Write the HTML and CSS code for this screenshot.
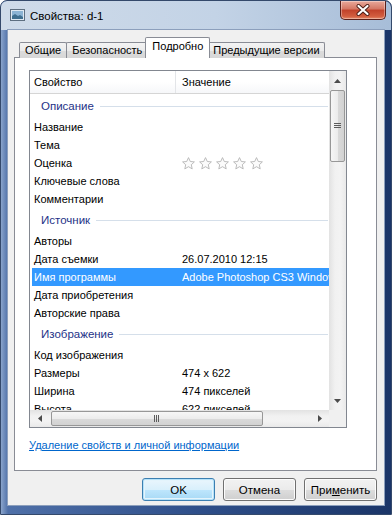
FILE: index.html
```html
<!DOCTYPE html>
<html lang="ru">
<head>
    <meta charset="UTF-8">
    <title>Свойства: d-1</title>
    <link rel="stylesheet" href="styles.css">
</head>
<body>
    <svg width="0" height="0" class="defs">
        <defs>
            <symbol id="star" viewBox="0 0 13 13">
                <polygon points="6.5,0.6 8.3,4.5 12.4,4.9 9.3,7.7 10.2,11.9 6.5,9.7 2.8,11.9 3.7,7.7 0.6,4.9 4.7,4.5" fill="#fbfbfb" stroke="#b4b4b4" stroke-width="0.9" stroke-linejoin="round"/>
            </symbol>
        </defs>
    </svg>

    <div class="window">
        <div class="titlebar">
            <svg class="app-icon" width="15" height="12" viewBox="0 0 15 12">
                <rect x="0.5" y="0.5" width="14" height="11" fill="#dfe9f2" stroke="#5e6f80"/>
                <rect x="2" y="2" width="11" height="8" fill="#8cb4d4"/>
                <path d="M2 7 L5 5 L8 7 L10 6 L13 8 L13 10 L2 10 Z" fill="#3f6f8f"/>
            </svg>
            <span class="title">Свойства: d-1</span>
            <div class="close">
                <svg width="14" height="12" viewBox="0 0 14 12">
                    <path d="M2.5 2 L11.5 10 M11.5 2 L2.5 10" stroke="#4a1c16" stroke-width="4" stroke-linecap="round"/>
                    <path d="M2.5 2 L11.5 10 M11.5 2 L2.5 10" stroke="#fff" stroke-width="2.2" stroke-linecap="round"/>
                </svg>
            </div>
        </div>

        <div class="client">
            <div class="tabs">
                <div class="tab">Общие</div>
                <div class="tab">Безопасность</div>
                <div class="tab active">Подробно</div>
                <div class="tab">Предыдущие версии</div>
            </div>

            <div class="panel">
                <div class="list">
                    <div class="list-top">
                        <div class="list-view">
                            <div class="list-head">
                                <div class="col-name">Свойство</div>
                                <div class="col-value">Значение</div>
                            </div>

                            <div class="group"><span>Описание</span></div>
                            <div class="row"><div class="col-name">Название</div><div class="col-value"></div></div>
                            <div class="row"><div class="col-name">Тема</div><div class="col-value"></div></div>
                            <div class="row">
                                <div class="col-name">Оценка</div>
                                <div class="col-value stars">
                                    <svg width="13" height="13"><use href="#star"/></svg>
                                    <svg width="13" height="13"><use href="#star"/></svg>
                                    <svg width="13" height="13"><use href="#star"/></svg>
                                    <svg width="13" height="13"><use href="#star"/></svg>
                                    <svg width="13" height="13"><use href="#star"/></svg>
                                </div>
                            </div>
                            <div class="row"><div class="col-name">Ключевые слова</div><div class="col-value"></div></div>
                            <div class="row"><div class="col-name">Комментарии</div><div class="col-value"></div></div>

                            <div class="group"><span>Источник</span></div>
                            <div class="row"><div class="col-name">Авторы</div><div class="col-value"></div></div>
                            <div class="row"><div class="col-name">Дата съемки</div><div class="col-value">26.07.2010 12:15</div></div>
                            <div class="row selected"><div class="col-name">Имя программы</div><div class="col-value">Adobe Photoshop CS3 Windows</div></div>
                            <div class="row"><div class="col-name">Дата приобретения</div><div class="col-value"></div></div>
                            <div class="row"><div class="col-name">Авторские права</div><div class="col-value"></div></div>

                            <div class="group"><span>Изображение</span></div>
                            <div class="row"><div class="col-name">Код изображения</div><div class="col-value"></div></div>
                            <div class="row"><div class="col-name">Размеры</div><div class="col-value">474 x 622</div></div>
                            <div class="row"><div class="col-name">Ширина</div><div class="col-value">474 пикселей</div></div>
                            <div class="row"><div class="col-name">Высота</div><div class="col-value">622 пикселей</div></div>
                        </div>

                        <div class="vscroll">
                            <div class="arrow-v">
                                <svg width="7" height="4" viewBox="0 0 7 4"><path d="M0 4 L3.5 0 L7 4 Z" fill="#4b4b4b"/></svg>
                            </div>
                            <div class="track-v">
                                <div class="thumb-v">
                                    <svg width="7" height="6" viewBox="0 0 7 6">
                                        <path d="M0 0.5 H7 M0 2.5 H7 M0 4.5 H7" stroke="#5c5c5c" stroke-width="1"/>
                                    </svg>
                                </div>
                            </div>
                            <div class="arrow-v">
                                <svg width="7" height="4" viewBox="0 0 7 4"><path d="M0 0 L3.5 4 L7 0 Z" fill="#4b4b4b"/></svg>
                            </div>
                        </div>
                    </div>

                    <div class="list-bottom">
                        <div class="hscroll">
                            <div class="arrow-h">
                                <svg width="4" height="7" viewBox="0 0 4 7"><path d="M4 0 L0 3.5 L4 7 Z" fill="#4b4b4b"/></svg>
                            </div>
                            <div class="track-h">
                                <div class="thumb-h">
                                    <svg width="6" height="7" viewBox="0 0 6 7">
                                        <path d="M0.5 0 V7 M2.5 0 V7 M4.5 0 V7" stroke="#5c5c5c" stroke-width="1"/>
                                    </svg>
                                </div>
                            </div>
                            <div class="arrow-h">
                                <svg width="4" height="7" viewBox="0 0 4 7"><path d="M0 0 L4 3.5 L0 7 Z" fill="#4b4b4b"/></svg>
                            </div>
                        </div>
                        <div class="corner"></div>
                    </div>
                </div>

                <a class="link" href="#">Удаление свойств и личной информации</a>
            </div>

            <div class="buttons">
                <button class="btn default">OK</button>
                <button class="btn">Отмена</button>
                <button class="btn">При<u>м</u>енить</button>
            </div>
        </div>
    </div>
</body>
</html>
```

FILE: styles.css
```css
* {
    box-sizing: border-box;
}
body {
    margin: 0;
    font-family: "Liberation Sans", Arial, sans-serif;
    font-size: 11px;
    color: #000;
}
.defs {
    position: absolute;
}
.window {
    width: 392px;
    height: 515px;
    display: flex;
    flex-direction: column;
    padding: 0 7px 9px 7px;
    border: 1px solid #34496b;
    border-radius: 7px 7px 0 0;
    background: linear-gradient(to right, #8aa4cb, #4f70a8 7px, #2f4f8a 50%, #1b3568 100%);
    overflow: hidden;
}
.titlebar {
    height: 29px;
    margin: 0 -7px;
    padding: 0 5px 0 9px;
    display: flex;
    align-items: flex-start;
    background: linear-gradient(to right, #cfdbe9, #c3d3e6 55%, #a7bdd8);
    border-radius: 6px 6px 0 0;
}
.app-icon {
    margin-top: 8px;
}
.title {
    margin: 8px 0 0 5px;
    font-size: 11.5px;
    line-height: 15px;
}
.close {
    margin-left: auto;
    width: 46px;
    height: 19px;
    display: flex;
    align-items: center;
    justify-content: center;
    border: 1px solid #5a1f1a;
    border-top: none;
    border-radius: 0 0 5px 5px;
    background: linear-gradient(to bottom, #e9a99b, #d47663 45%, #c1412a 50%, #d25d3f 85%, #e58a6a);
    box-shadow: inset 0 0 0 1px rgba(255, 255, 255, 0.35);
}
.client {
    flex: 1;
    background: #f0f0f0;
    padding: 7px 7px 0 6px;
    box-shadow: 0 0 0 1px #8c9fbc;
}
.tabs {
    display: flex;
    align-items: flex-end;
    height: 21px;
    padding-left: 5px;
    margin-bottom: -1px;
    position: relative;
}
.tab {
    height: 16px;
    line-height: 14px;
    padding: 0 5px;
    border: 1px solid #898c95;
    border-bottom: none;
    margin-right: -1px;
    border-radius: 2px 2px 0 0;
    background: linear-gradient(to bottom, #f3f3f3, #ebebeb 50%, #dcdcdc 51%, #d7d7d7);
    white-space: nowrap;
}
.tab.active {
    height: 21px;
    line-height: 17px;
    padding: 0 6px;
    margin: 0 -1px 0 -2px;
    background: #fff;
    position: relative;
    z-index: 1;
}
.tab.active + .tab {
    margin-left: -1px;
    padding: 0 4px;
}
.panel {
    height: 414px;
    border: 1px solid #898c95;
    background: #fff;
    padding: 12px 0 0 14px;
}
.list {
    width: 318px;
    height: 358px;
    border: 1px solid #828790;
    display: flex;
    flex-direction: column;
}
.list-top {
    display: flex;
    height: 339px;
}
.list-view {
    width: 299px;
    overflow: hidden;
}
.list-head {
    display: flex;
    height: 23px;
    line-height: 23px;
    border-bottom: 1px solid #d5d5d5;
    background: linear-gradient(to bottom, #fff, #fff 50%, #f6f7f9);
}
.list-head .col-name {
    border-right: 1px solid #e3e5e8;
}
.col-name {
    width: 146px;
    flex-shrink: 0;
    padding-left: 4px;
    white-space: nowrap;
    overflow: hidden;
}
.col-value {
    padding-left: 6px;
    white-space: nowrap;
}
.row {
    display: flex;
    height: 18px;
    line-height: 18px;
}
.row.selected {
    background: linear-gradient(to right, transparent 2px, #3399ff 2px);
    color: #fff;
}
.stars {
    display: flex;
    align-items: center;
    gap: 4px;
}
.group {
    height: 24px;
    display: flex;
    align-items: center;
    padding: 0 1px 0 11px;
    color: #1e3287;
    font-size: 11.5px;
}
.group::after {
    content: "";
    flex: 1;
    height: 1px;
    margin-left: 6px;
    background: #d5dfea;
}
.vscroll {
    width: 17px;
    display: flex;
    flex-direction: column;
    background: linear-gradient(to right, #e2e2e2, #f1f1f1 35%, #f3f3f3 65%, #e9e9e9);
}
.arrow-v {
    height: 19px;
    display: flex;
    align-items: center;
    justify-content: center;
}
.track-v {
    flex: 1;
}
.thumb-v {
    height: 72px;
    margin: 0 1px;
    border: 1px solid #979797;
    border-radius: 2px;
    background: linear-gradient(to right, #f6f6f6, #ececec 50%, #dadada 51%, #d2d2d2);
    display: flex;
    align-items: center;
    justify-content: center;
}
.list-bottom {
    display: flex;
    height: 17px;
}
.hscroll {
    width: 299px;
    display: flex;
    background: linear-gradient(to bottom, #e2e2e2, #f1f1f1 35%, #f3f3f3 65%, #e9e9e9);
}
.arrow-h {
    width: 19px;
    display: flex;
    align-items: center;
    justify-content: center;
}
.track-h {
    flex: 1;
    padding-left: 2px;
}
.thumb-h {
    width: 212px;
    height: 15px;
    margin-top: 1px;
    border: 1px solid #979797;
    border-radius: 2px;
    background: linear-gradient(to bottom, #f6f6f6, #ececec 50%, #dadada 51%, #d2d2d2);
    display: flex;
    align-items: center;
    justify-content: center;
}
.corner {
    flex: 1;
    background: #f0f0f0;
}
.link {
    display: inline-block;
    margin-top: 10px;
    color: #0066cc;
    font-size: 11px;
    line-height: 14px;
}
.buttons {
    display: flex;
    justify-content: flex-end;
    gap: 8px;
    margin-top: 7px;
}
.btn {
    width: 73px;
    height: 23px;
    padding: 0;
    font-family: "Liberation Sans", Arial, sans-serif;
    font-size: 11.5px;
    color: #000;
    border: 1px solid #707070;
    border-radius: 3px;
    background: linear-gradient(to bottom, #f2f2f2, #ebebeb 50%, #dddddd 51%, #cfcfcf);
    box-shadow: inset 0 0 0 1px #fcfcfc;
}
.btn.default {
    border-color: #3c7fb1;
    background: linear-gradient(to bottom, #eaf6fd, #d9f0fc 50%, #bee6fd 51%, #a7d9f5);
    box-shadow: inset 0 0 0 1px #b6e2f9, inset 0 0 0 2px #e4f4fc;
}
```
